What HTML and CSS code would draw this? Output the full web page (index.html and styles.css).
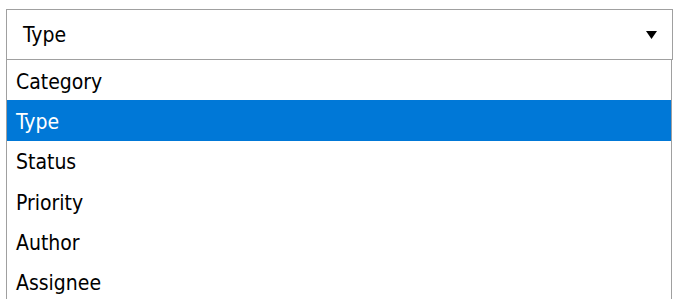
FILE: index.html
```html
<!DOCTYPE html>
<html>
<head>
<meta charset="utf-8">
<link rel="stylesheet" href="styles.css">
</head>
<body>
<div class="wrap">
  <div class="select">
    <span class="value">Type</span>
    <svg class="arrow" width="11" height="8" viewBox="0 0 11 8"><polygon points="0,0 11,0 5.5,8" fill="#000"/></svg>
  </div>
  <ul class="list">
    <li class="item">Category</li>
    <li class="item selected">Type</li>
    <li class="item">Status</li>
    <li class="item">Priority</li>
    <li class="item">Author</li>
    <li class="item">Assignee</li>
  </ul>
</div>
</body>
</html>
```
FILE: styles.css
```css
html, body {
  margin: 0;
  padding: 0;
  background: #fff;
}
body {
  font-family: "DejaVu Sans Condensed", "DejaVu Sans", sans-serif;
  font-size: 21px;
  color: #000;
}
.wrap {
  padding: 9px 0 0 6px;
  width: 667px;
}
.select {
  box-sizing: border-box;
  height: 51px;
  border: 1px solid #a0a0a0;
  display: flex;
  align-items: center;
  justify-content: space-between;
  padding: 1px 15px 0 16px;
}
.value {
  line-height: 1;
}
.arrow {
  display: block;
}
.list {
  list-style: none;
  margin: 0;
  padding: 0;
  width: 666px;
  box-sizing: border-box;
  border-left: 1px solid #a0a0a0;
  border-right: 1px solid #a0a0a0;
}
.item {
  height: 40.33px;
  display: flex;
  align-items: center;
  padding: 3px 0 0 9px;
  box-sizing: border-box;
}
.item.selected {
  background: #0078d7;
  color: #fff;
}
```
